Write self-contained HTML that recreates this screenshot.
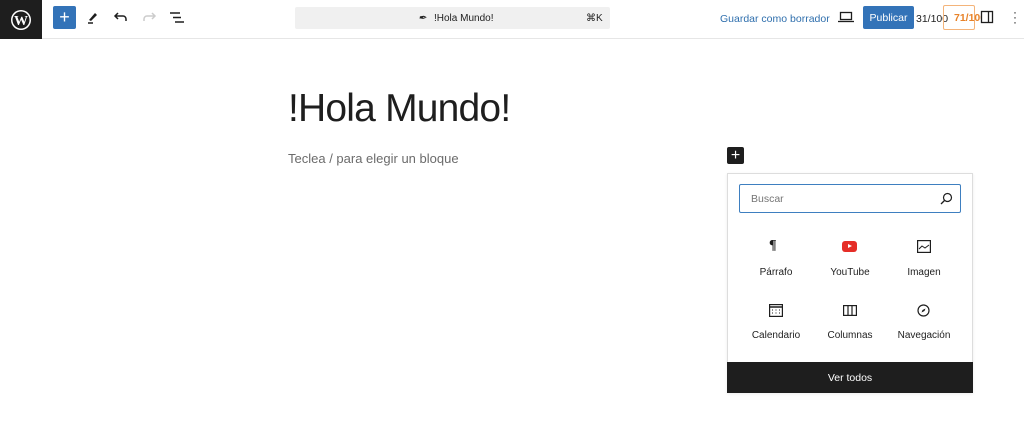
<!DOCTYPE html>
<html><head><meta charset="utf-8"><style>
*{box-sizing:border-box;margin:0;padding:0}
body{width:1024px;height:430px;overflow:hidden;background:#fff;font-family:"Liberation Sans",sans-serif;color:#1e1e1e;position:relative}
.abs{position:absolute}
.top{left:0;top:0;width:1024px;height:39px;border-bottom:1px solid #e6e6e6;background:#fff}
.wp{left:0;top:0;width:42px;height:39px;background:#1e1e1e;display:flex;align-items:center;justify-content:center}
.lbl{font-size:10px;text-align:center;width:80px;color:#1e1e1e}
</style></head><body>
<div class="abs top"></div>
<div class="abs wp"><svg width="22" height="22" viewBox="0 0 22 22"><circle cx="11" cy="11" r="10" fill="#fff"/><circle cx="11" cy="11" r="8.5" fill="#1e1e1e"/><text x="11" y="16" font-size="14" font-family="Liberation Serif" font-weight="bold" fill="#fff" text-anchor="middle">W</text></svg></div>
<div class="abs" style="left:53px;top:6px;width:23px;height:23px;background:#3373b8;border-radius:2px;color:#fff;font-size:18px;line-height:22px;text-align:center">+</div>
<svg class="abs" style="left:85px;top:9px" width="16" height="16" viewBox="0 0 16 16"><path d="M4 11 L10 4 L12 6 L6 12 Z" fill="#1e1e1e"/><path d="M3 14h5" stroke="#1e1e1e" stroke-width="1.5"/></svg>
<svg class="abs" style="left:113px;top:10px" width="16" height="14" viewBox="0 0 16 14"><path d="M5 3 L2 6 L5 9 M2 6 H10 A3 3 0 0 1 13 9 V11" stroke="#1e1e1e" stroke-width="1.5" fill="none"/></svg>
<svg class="abs" style="left:141px;top:10px" width="16" height="14" viewBox="0 0 16 14"><path d="M11 3 L14 6 L11 9 M14 6 H6 A3 3 0 0 0 3 9 V11" stroke="#ccc" stroke-width="1.5" fill="none"/></svg>
<svg class="abs" style="left:169px;top:11px" width="16" height="14" viewBox="0 0 16 14"><path d="M1 2h10M4 6.5h8M6 11h9" stroke="#1e1e1e" stroke-width="1.5"/></svg>
<div class="abs" style="left:295px;top:7px;width:315px;height:22px;background:#f0f0f0;border-radius:2px;font-size:10px;line-height:22px">
<span class="abs" style="left:123px;top:1px;font-style:italic">✒</span>
<span class="abs" style="left:139px;top:1px">!Hola Mundo!</span>
<span class="abs" style="left:291px;top:1px">⌘K</span></div>
<div class="abs" style="left:720px;top:13px;font-size:10.5px;color:#2f6fad">Guardar como borrador</div>
<svg class="abs" style="left:838px;top:11px" width="16" height="12" viewBox="0 0 16 12"><rect x="2.5" y="1.5" width="11" height="7" fill="none" stroke="#1e1e1e" stroke-width="1.3"/><path d="M0 10.5h16" stroke="#1e1e1e" stroke-width="1.3"/></svg>
<div class="abs" style="left:863px;top:6px;width:51px;height:23px;background:#3373b8;border-radius:2px;color:#fff;font-size:10.5px;line-height:25px;text-align:center">Publicar</div>
<div class="abs" style="left:916px;top:13px;font-size:10.5px">31/100</div>
<div class="abs" style="left:943px;top:5px;width:32px;height:25px;border:1px solid #f4b47a;border-radius:2px;color:#e8832a;font-size:10.5px;font-weight:bold;line-height:25px;padding-left:10px;white-space:nowrap">71/100</div>
<svg class="abs" style="left:980px;top:10px" width="14" height="14" viewBox="0 0 14 14"><rect x="1.5" y="1.5" width="11" height="11" fill="#fff" stroke="#1e1e1e" stroke-width="1.3"/><path d="M8.5 1.5v11" stroke="#1e1e1e" stroke-width="1.3"/></svg>
<div class="abs" style="left:1013px;top:10px;font-size:12px;line-height:5px;color:#1e1e1e">·<br>·<br>·</div>
<div class="abs" style="left:288px;top:87px;font-size:39px;letter-spacing:-0.8px">!Hola Mundo!</div>
<div class="abs" style="left:288px;top:151px;font-size:13px;color:#6b6b6b">Teclea / para elegir un bloque</div>
<div class="abs" style="left:727px;top:147px;width:17px;height:17px;background:#1e1e1e;border-radius:2px;color:#fff;font-size:16px;line-height:17px;text-align:center">+</div>
<div class="abs" style="left:727px;top:173px;width:246px;height:220px;border:1px solid #ddd;background:#fff;box-shadow:0 1px 3px rgba(0,0,0,.08)"></div>
<div class="abs" style="left:739px;top:184px;width:222px;height:29px;border:1.5px solid #3e7fc0;border-radius:2px;font-size:10.5px;color:#757575;line-height:29px;padding-left:11px">Buscar</div>
<svg class="abs" style="left:940px;top:192px" width="13" height="13" viewBox="0 0 13 13"><circle cx="7.5" cy="5.5" r="4" fill="none" stroke="#1e1e1e" stroke-width="1.2"/><path d="M4.5 8.5L1 12" stroke="#1e1e1e" stroke-width="1.3"/></svg>
<div class="abs" style="left:769px;top:238px;font-size:14px;font-weight:bold;font-family:'Liberation Serif'">¶</div>
<div class="abs" style="left:842px;top:241px;width:15px;height:11px;background:#e52d27;border-radius:3px"></div>
<div class="abs" style="left:848px;top:244px;width:0;height:0;border-left:4px solid #fff;border-top:2.5px solid transparent;border-bottom:2.5px solid transparent"></div>
<svg class="abs" style="left:917px;top:240px" width="14" height="13" viewBox="0 0 14 13"><rect x="0.6" y="0.6" width="12.8" height="11.8" fill="none" stroke="#1e1e1e" stroke-width="1.2"/><path d="M2 9l3-3 3 2 4-3" stroke="#1e1e1e" fill="none"/></svg>
<div class="abs lbl" style="left:736px;top:267px">Párrafo</div>
<div class="abs lbl" style="left:810px;top:267px">YouTube</div>
<div class="abs lbl" style="left:884px;top:267px">Imagen</div>
<svg class="abs" style="left:769px;top:304px" width="14" height="13" viewBox="0 0 14 13"><rect x="0.6" y="0.6" width="12.8" height="11.8" fill="none" stroke="#1e1e1e" stroke-width="1.2"/><path d="M0.6 3h12.8" stroke="#1e1e1e" stroke-width="1.5"/><path d="M3 6h1M6.5 6h1M10 6h1M3 9h1M6.5 9h1M10 9h1" stroke="#1e1e1e"/></svg>
<svg class="abs" style="left:843px;top:305px" width="14" height="11" viewBox="0 0 14 11"><rect x="0.6" y="0.6" width="12.8" height="9.8" fill="none" stroke="#1e1e1e" stroke-width="1.2"/><path d="M5 0.6v9.8M9 0.6v9.8" stroke="#1e1e1e" stroke-width="1.2"/></svg>
<svg class="abs" style="left:917px;top:304px" width="13" height="13" viewBox="0 0 13 13"><circle cx="6.5" cy="6.5" r="5.5" fill="none" stroke="#1e1e1e" stroke-width="1.2"/><path d="M8.5 4.5L5.5 6 4.5 8.5 7.5 7z" fill="#1e1e1e"/></svg>
<div class="abs lbl" style="left:736px;top:330px">Calendario</div>
<div class="abs lbl" style="left:810px;top:330px">Columnas</div>
<div class="abs lbl" style="left:884px;top:330px">Navegación</div>
<div class="abs" style="left:727px;top:362px;width:246px;height:31px;background:#1e1e1e;color:#fff;font-size:10.5px;line-height:32px;text-align:center">Ver todos</div>
</body></html>
